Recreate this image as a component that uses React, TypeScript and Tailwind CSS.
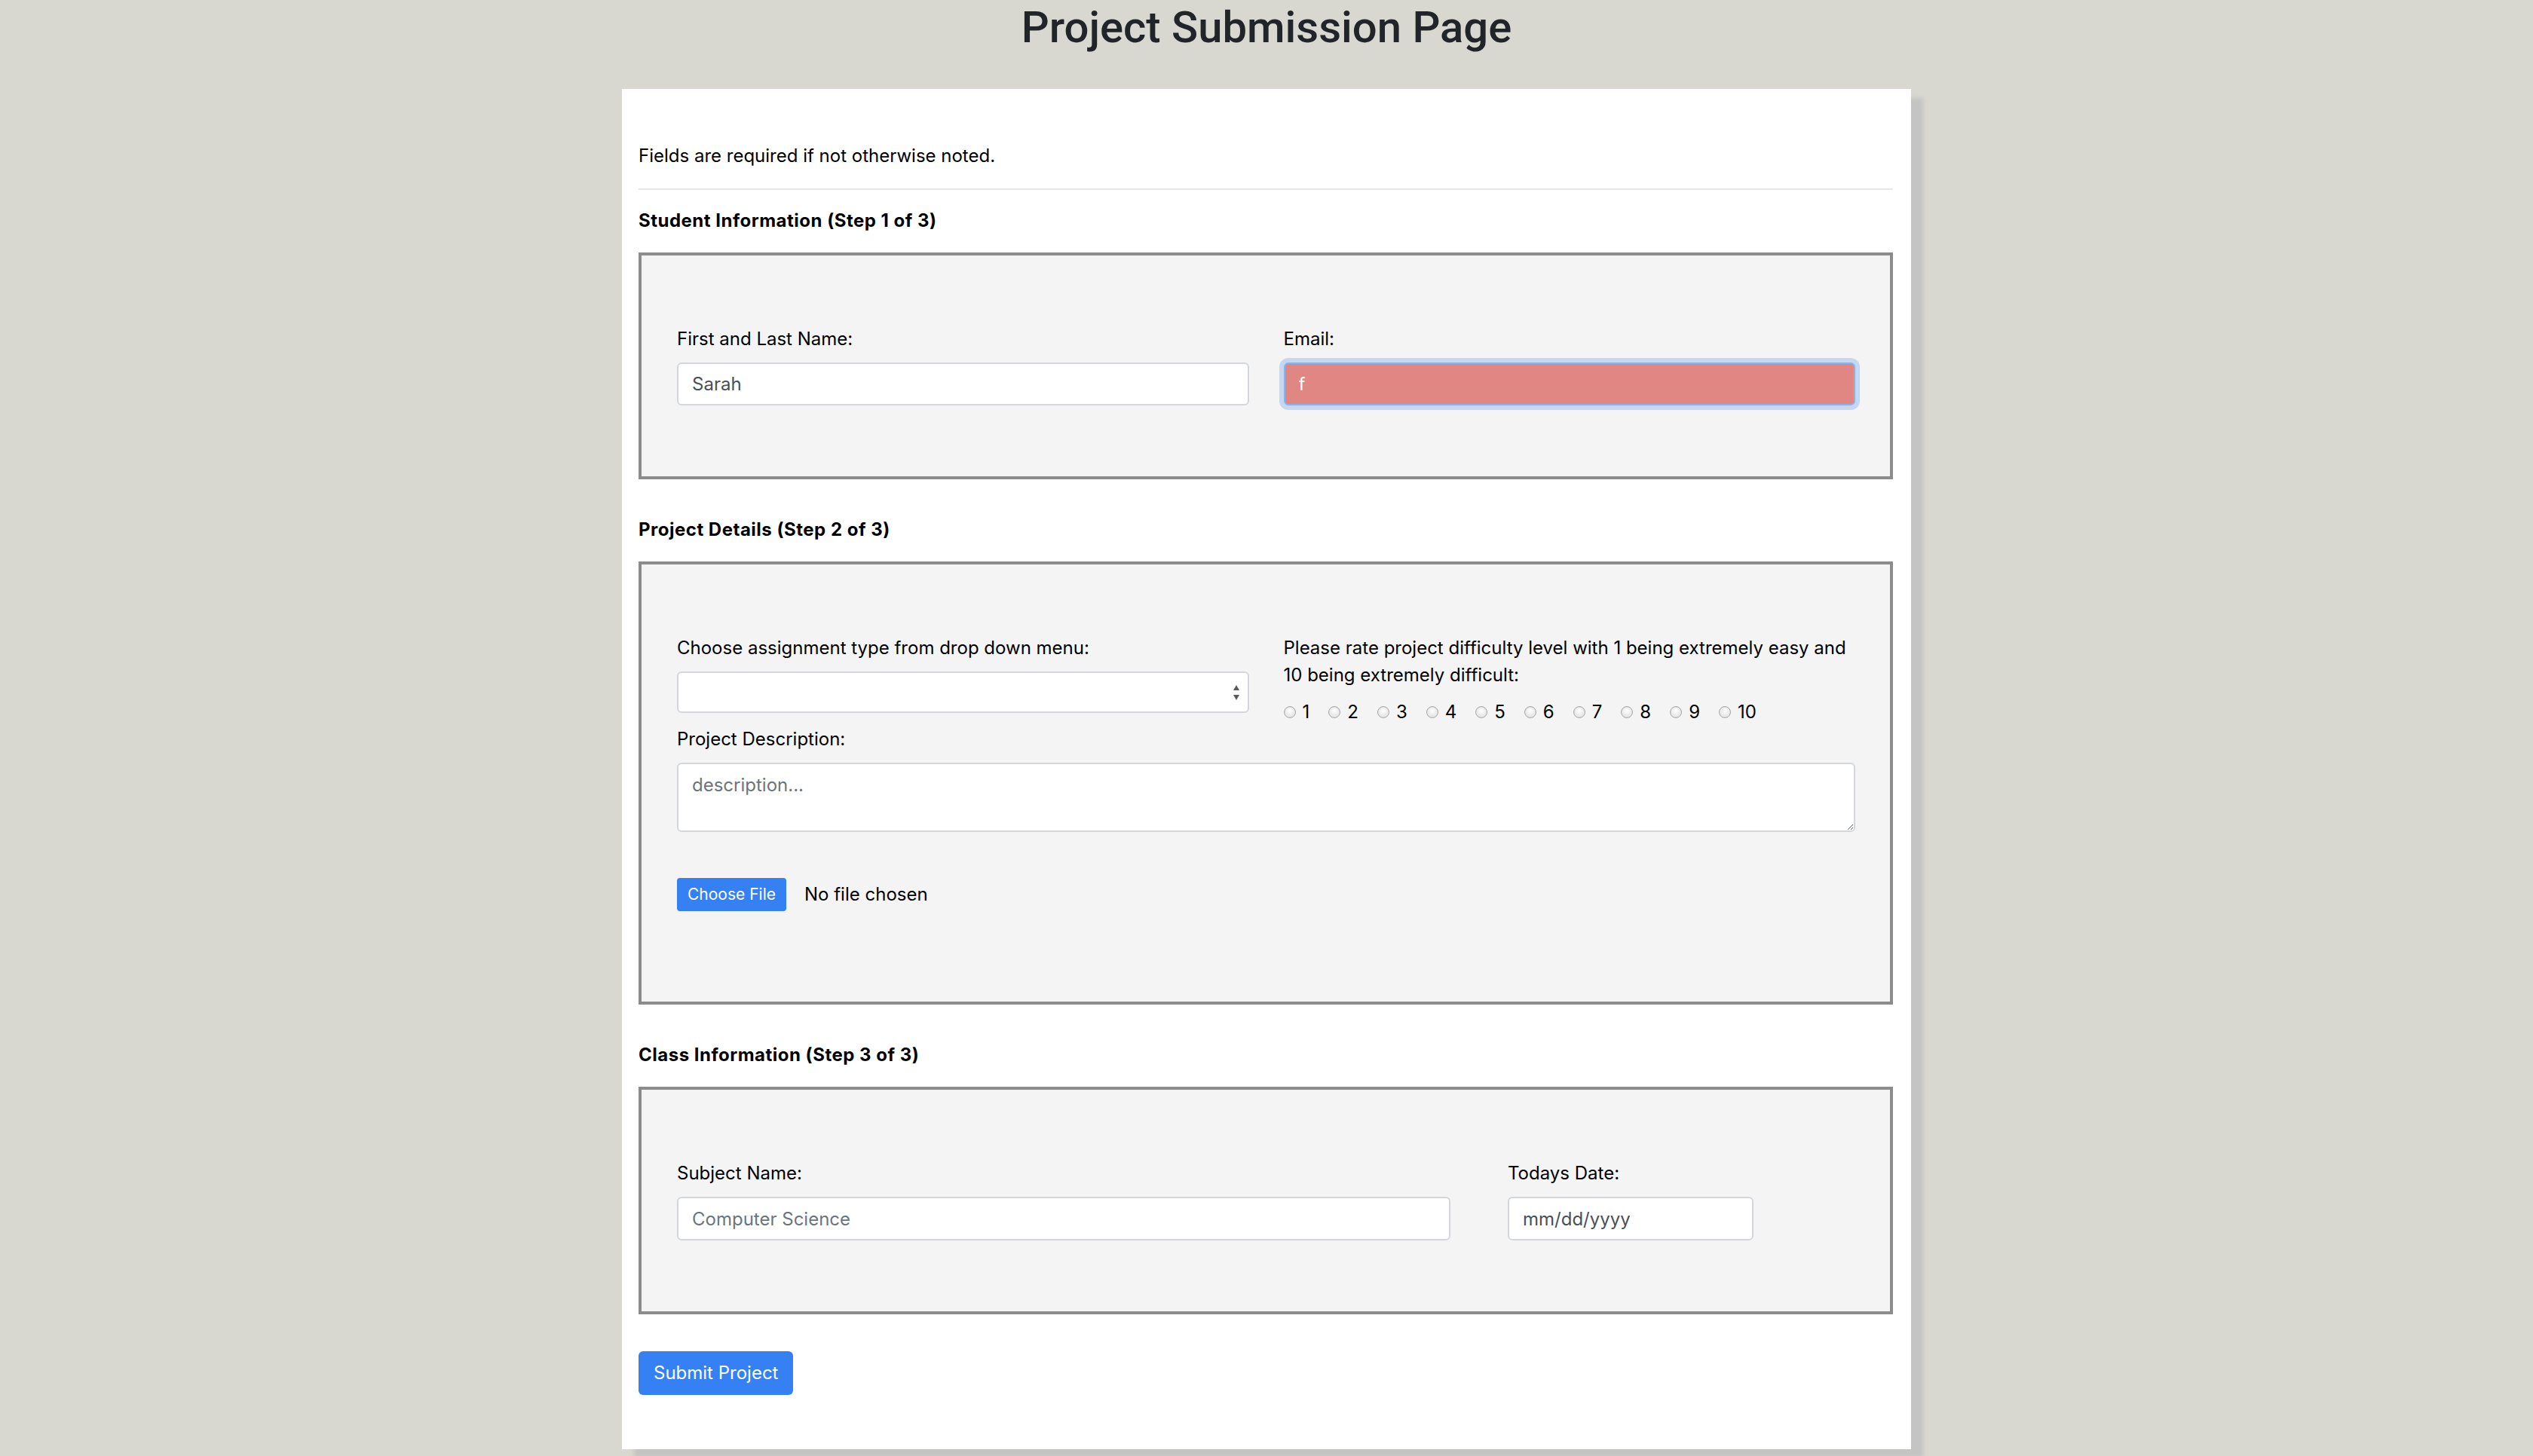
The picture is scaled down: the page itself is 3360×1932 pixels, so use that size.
import React from 'react';

const labelCls = 'block text-[24px] leading-[36px] text-black';
const inputCls =
  'block w-full h-[57px] rounded-[6px] border-2 border-[#d3d7dc] bg-white px-[18px] text-[24px] text-[#495057] placeholder:text-[#6c757d] outline-none';

function SectionTitle({ children, first }: { children: React.ReactNode; first?: boolean }) {
  return (
    <h2
      className={`${first ? 'mt-[23px]' : 'mt-[49px]'} mb-[24px] text-[24px] leading-[36px] font-bold tracking-[0.5px] text-black`}
    >
      {children}
    </h2>
  );
}

function Box({ children, bottom }: { children: React.ReactNode; bottom?: string }) {
  return (
    <div className={`border-4 border-[#8c8c8c] bg-[#f4f4f4] pl-[47px] pr-[46px] pt-[93px] ${bottom ?? 'pb-[94px]'}`}>
      {children}
    </div>
  );
}

function Radio({ n }: { n: number }) {
  return (
    <label className="flex items-center">
      <span className="inline-block h-[16px] w-[16px] rounded-full border border-[#a9a9a9] bg-[radial-gradient(circle_at_50%_35%,#ffffff,#d9d9d9)] shadow-[inset_0_1px_1px_rgba(0,0,0,0.08)]" />
      <span className="ml-[9px] text-[24px] leading-[36px] text-black">{n}</span>
    </label>
  );
}

export default function App() {
  const levels = [1, 2, 3, 4, 5, 6, 7, 8, 9, 10];

  return (
    <div className="min-h-screen bg-[#d8d8d0] font-['Inter','Liberation_Sans',sans-serif] overflow-hidden">
      <h1 className="text-center font-['Roboto','Liberation_Sans',sans-serif] text-[58px] leading-[72px] font-medium text-[#212529]">
        Project Submission Page
      </h1>

      <div className="mx-auto mt-[46px] w-[1710px] bg-white pl-[22px] pr-[24px] pt-[71px] pb-[72px] shadow-[16px_12px_6px_#c4c4c4]">
        <p className="text-[24px] leading-[36px] text-black">Fields are required if not otherwise noted.</p>
        <hr className="mt-[25px] border-0 border-t-2 border-[#e6e6e6]" />

        <SectionTitle first>Student Information (Step 1 of 3)</SectionTitle>
        <Box>
          <div className="grid grid-cols-2 gap-x-[46px]">
            <div>
              <label className={labelCls}>First and Last Name:</label>
              <input className={`${inputCls} mt-[13px]`} defaultValue="Sarah" />
            </div>
            <div>
              <label className={labelCls}>Email:</label>
              <input
                className="mt-[13px] block h-[57px] w-full rounded-[6px] border-2 border-[#84b5f3] bg-[#e08783] px-[18px] text-[24px] text-white outline-none shadow-[0_0_0_6px_#c4d8f4]"
                defaultValue="f"
              />
            </div>
          </div>
        </Box>

        <SectionTitle>Project Details (Step 2 of 3)</SectionTitle>
        <Box bottom="pb-[120px]">
          <div className="grid grid-cols-2 gap-x-[46px]">
            <div>
              <label className={labelCls}>Choose assignment type from drop down menu:</label>
              <div className="relative mt-[13px] h-[55px] rounded-[6px] border-2 border-[#d3d7dc] bg-white">
                <svg className="absolute right-[10px] top-[14px]" width="10" height="24" viewBox="0 0 10 24">
                  <path d="M5 2 L9 9 L1 9 Z" fill="#5a5a5a" />
                  <path d="M5 22 L9 15 L1 15 Z" fill="#5a5a5a" />
                </svg>
              </div>
            </div>
            <div>
              <p className={labelCls}>
                Please rate project difficulty level with 1 being extremely easy and 10 being extremely difficult:
              </p>
              <div className="mt-[13px] flex items-center gap-x-[25px]">
                {levels.map((n) => (
                  <Radio key={n} n={n} />
                ))}
              </div>
            </div>
          </div>

          <label className={labelCls}>Project Description:</label>
          <textarea
            className="mt-[13px] block h-[92px] w-full rounded-[6px] border-2 border-[#d3d7dc] bg-white px-[18px] py-[10px] text-[24px] text-[#495057] placeholder:text-[#6c757d] outline-none"
            placeholder="description..."
          />

          <div className="mt-[61px] flex items-center">
            <button className="h-[44px] rounded-[4px] bg-[#3580f2] px-[14px] text-[21px] text-white">Choose File</button>
            <span className="ml-[24px] text-[24px] leading-[36px] text-black">No file chosen</span>
          </div>
        </Box>

        <SectionTitle>Class Information (Step 3 of 3)</SectionTitle>
        <Box>
          <div className="flex">
            <div className="w-[1026px]">
              <label className={labelCls}>Subject Name:</label>
              <input className={`${inputCls} mt-[13px] h-[58px]`} placeholder="Computer Science" />
            </div>
            <div className="ml-[76px] w-[326px]">
              <label className={labelCls}>Todays Date:</label>
              <input className={`${inputCls} mt-[13px] h-[58px]`} defaultValue="mm/dd/yyyy" />
            </div>
          </div>
        </Box>

        <button className="mt-[49px] h-[58px] rounded-[6px] bg-[#3580f2] px-[20px] text-[24px] text-white">
          Submit Project
        </button>
      </div>
    </div>
  );
}
